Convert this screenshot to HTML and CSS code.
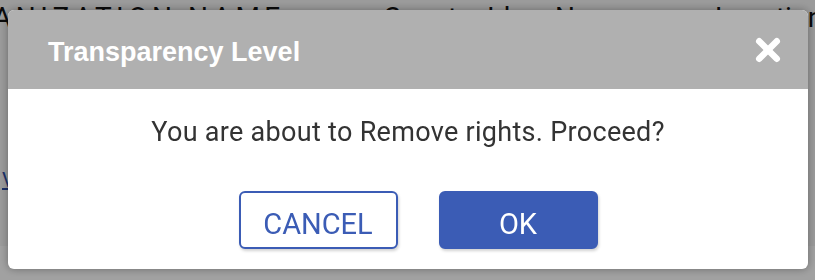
FILE: index.html
```html
<!DOCTYPE html>
<html lang="en">
<head>
<meta charset="utf-8">
<title>Transparency Level</title>
<link rel="stylesheet" href="styles.css">
</head>
<body>
<div class="page">
  <div class="page-top">
    <div class="bg-head">
      <span class="bg-col bg-org">ORGANIZATION NAME</span>
      <span class="bg-col bg-c2">Country</span>
      <span class="bg-col bg-c3">Id</span>
      <span class="bg-col bg-c4">Name</span>
      <span class="bg-col bg-c5">Location</span>
    </div>
    <a class="bg-link" href="#">View details</a>
  </div>
  <div class="page-bottom"></div>
</div>

<div class="overlay">
  <div class="modal" role="dialog" aria-labelledby="modal-title">
    <div class="modal-header">
      <h2 class="modal-title" id="modal-title">Transparency Level</h2>
      <button class="modal-close" aria-label="Close">
        <svg viewBox="0 0 26 26" width="26" height="26" aria-hidden="true">
          <line x1="4.2" y1="4.2" x2="21.8" y2="21.8" stroke="#fff" stroke-width="6.4" stroke-linecap="round"/>
          <line x1="21.8" y1="4.2" x2="4.2" y2="21.8" stroke="#fff" stroke-width="6.4" stroke-linecap="round"/>
        </svg>
      </button>
    </div>
    <div class="modal-body">
      <p class="modal-message">You are about to Remove rights. Proceed?</p>
      <div class="modal-actions">
        <button class="btn btn-outline">CANCEL</button>
        <button class="btn btn-primary">OK</button>
      </div>
    </div>
  </div>
</div>
</body>
</html>
```

FILE: styles.css
```css
html, body {
  margin: 0;
  padding: 0;
}

body {
  width: 815px;
  height: 280px;
  overflow: hidden;
  background: #ffffff;
  font-family: Roboto, "Liberation Sans", sans-serif;
}

.page {
  display: flex;
  flex-direction: column;
  height: 280px;
}

.page-top {
  background: #f6f6f6;
  height: 246px;
  display: flex;
  flex-direction: column;
}

.page-bottom {
  flex: 1;
  background: #ffffff;
}

.bg-head {
  display: flex;
  margin-top: 4px;
  margin-left: -76px;
  font-size: 28px;
  line-height: 28px;
  color: #111;
  white-space: nowrap;
}

.bg-col {
  flex: none;
}

.bg-org {
  width: 459px;
  letter-spacing: 4.5px;
}

.bg-c2 { width: 104px; }
.bg-c3 { width: 68px; }
.bg-c4 { width: 160px; }

.bg-link {
  margin-top: 136px;
  margin-left: 2px;
  font-size: 20px;
  color: #2f4fa8;
  text-decoration: underline;
  align-self: flex-start;
}

.overlay {
  position: fixed;
  inset: 0;
  background: rgba(0, 0, 0, 0.37);
  display: flex;
  align-items: flex-start;
  padding: 10px 7px 0 8px;
}

.modal {
  width: 800px;
  height: 259px;
  border-radius: 6px;
  overflow: hidden;
  background: #ffffff;
  box-shadow: 0 0 8px rgba(0, 0, 0, 0.35);
  display: flex;
  flex-direction: column;
}

.modal-header {
  height: 79px;
  flex: none;
  background: #b0b0b0;
  display: flex;
  align-items: center;
  justify-content: space-between;
  padding: 0 27px 0 40px;
  box-sizing: border-box;
}

.modal-title {
  margin: 6px 0 0;
  font-family: "Liberation Sans", Arial, sans-serif;
  font-weight: bold;
  font-size: 27px;
  line-height: 31px;
  color: #ffffff;
}

.modal-close {
  border: 0;
  padding: 0;
  margin: 0;
  background: none;
  width: 26px;
  height: 26px;
  display: flex;
}

.modal-body {
  flex: 1;
  display: flex;
  flex-direction: column;
  align-items: center;
  padding-top: 28px;
}

.modal-message {
  margin: 0;
  font-size: 27px;
  line-height: 30px;
  letter-spacing: 0.3px;
  color: #333333;
}

.modal-actions {
  margin-top: 44px;
  display: flex;
  gap: 41px;
  padding-left: 20px;
}

.btn {
  width: 159px;
  height: 58px;
  box-sizing: border-box;
  border-radius: 6px;
  font-family: Roboto, "Liberation Sans", sans-serif;
  font-size: 29px;
  padding: 7px 0 0;
  box-shadow: 1px 2px 3px rgba(0, 0, 0, 0.18);
}

.btn-outline {
  background: #ffffff;
  border: 2px solid #3b5cb5;
  color: #3b5cb5;
}

.btn-primary {
  background: #3b5cb5;
  border: 2px solid #3b5cb5;
  color: #ffffff;
}
```
